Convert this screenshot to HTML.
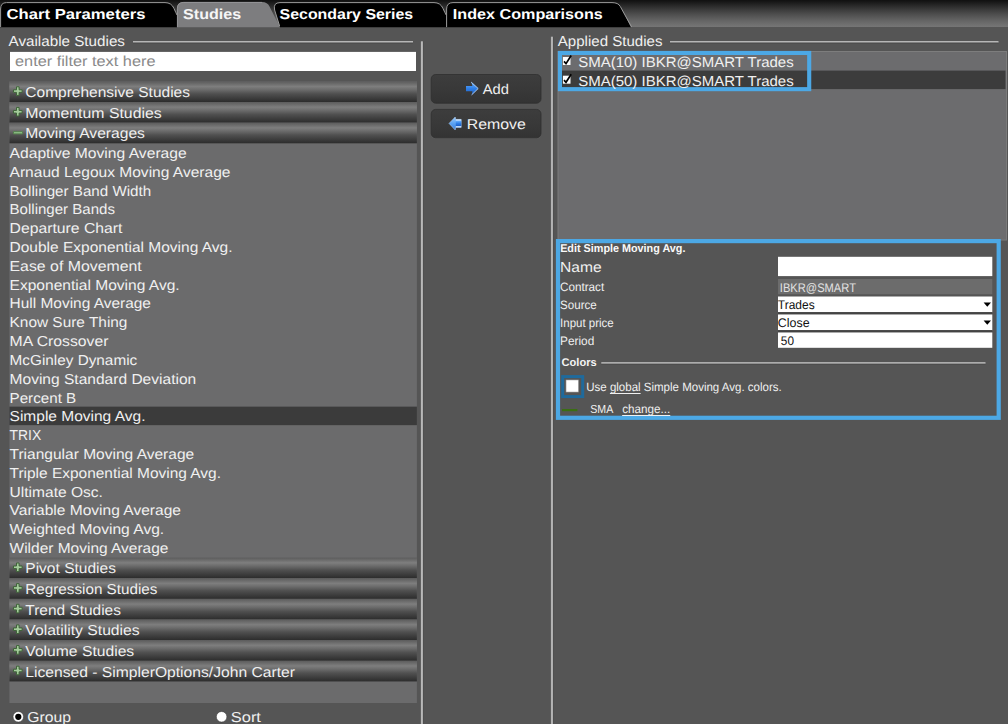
<!DOCTYPE html><html><head><meta charset="utf-8"><title>Studies</title><style>
*{box-sizing:border-box;margin:0;padding:0}
html,body{width:1008px;height:724px;overflow:hidden;background:#555555;font-family:"Liberation Sans",sans-serif;}
#g{position:absolute;left:0;top:0}
.t{position:absolute;white-space:pre;transform-origin:0 0;line-height:1;text-rendering:geometricPrecision}
u{text-decoration-thickness:1px;text-underline-offset:1.5px}
</style></head><body>
<svg id="g" width="1008" height="724" viewBox="0 0 1008 724">
<defs>
<linearGradient id="tb" x1="0" y1="0" x2="0" y2="1"><stop offset="0" stop-color="#101010"/><stop offset="0.1" stop-color="#1b1b1b"/><stop offset="0.35" stop-color="#3a3a3a"/><stop offset="0.55" stop-color="#505050"/><stop offset="0.78" stop-color="#666666"/><stop offset="1" stop-color="#767676"/></linearGradient>
<linearGradient id="hd" x1="0" y1="0" x2="0" y2="1"><stop offset="0" stop-color="#5c5c5c"/><stop offset="0.12" stop-color="#6c6c6c"/><stop offset="0.25" stop-color="#7e7e7e"/><stop offset="0.4" stop-color="#6c6c6c"/><stop offset="0.6" stop-color="#505050"/><stop offset="0.82" stop-color="#3c3c3c"/><stop offset="1" stop-color="#2c2c2c"/></linearGradient>
<linearGradient id="bt" x1="0" y1="0" x2="0" y2="1"><stop offset="0" stop-color="#3d3d3d"/><stop offset="0.6" stop-color="#383838"/><stop offset="1" stop-color="#333333"/></linearGradient>
<linearGradient id="g1" x1="0" y1="0" x2="0" y2="1"><stop offset="0" stop-color="#6cb4ff"/><stop offset="0.5" stop-color="#2f7fe6"/><stop offset="1" stop-color="#1d5fc4"/></linearGradient>
<linearGradient id="g2" x1="0" y1="0" x2="0" y2="1"><stop offset="0" stop-color="#9accff"/><stop offset="0.5" stop-color="#5aa2f2"/><stop offset="1" stop-color="#3b7fdc"/></linearGradient>
<linearGradient id="vl" x1="0" y1="0" x2="1" y2="0"><stop offset="0" stop-color="#7a7a7a"/><stop offset="0.45" stop-color="#d2d2d2"/><stop offset="1" stop-color="#8a8a8a"/></linearGradient>
</defs>
<rect x="0.00" y="0.00" width="1008.00" height="27.00" fill="url(#tb)" />
<path d="M0 27.2 L0 9 Q0 2.5 6.5 2.5 L165 2.5 Q171.5 2.5 174 8.5 Q176 13 177 15 L177 27.2 Z" fill="#000"/>
<path d="M0.6 27 L0.6 9 Q0.6 2.6 6.5 2.6 L165 2.6 Q171.5 2.6 174 8.5 Q176 13 177 15" fill="none" stroke="#9a9a9a" stroke-width="1"/>
<path d="M177 27.2 L177 8.5 Q177 2 183.5 2 L262 2 Q267.5 2 269.5 6.5 L280 27.2 Z" fill="#7d7d7f"/>
<path d="M177.4 27 L177.4 8.5 Q177.4 2.4 183.5 2.4 L262 2.4" fill="none" stroke="#9c9c9e" stroke-width="0.8"/>
<path d="M280 27.2 L274.5 10 Q272.8 2.5 280 2.5 L434 2.5 Q440.5 2.5 443 8.5 Q445 13 446.2 15 L446.2 27.2 Z" fill="#000"/>
<path d="M279.6 26 L274.6 10 Q273 2.6 280 2.6 L434 2.6 Q440.5 2.6 443 8.5 Q445 13 446.2 15" fill="none" stroke="#9a9a9a" stroke-width="1"/>
<path d="M446.4 27.2 L446.4 9 Q446.4 2.5 453 2.5 L612 2.5 Q618.3 2.5 620.3 6.5 L631 27.2 Z" fill="#000"/>
<path d="M446.6 27 L446.6 9 Q446.6 2.6 453 2.6 L612 2.6 Q618.3 2.6 620.3 6.5 L631.6 27" fill="none" stroke="#9a9a9a" stroke-width="1"/>
<rect x="133.00" y="41.00" width="280.00" height="1.70" fill="#b6b6b6" />
<rect x="133.00" y="42.70" width="280.00" height="0.90" fill="#4b4b4b" />
<rect x="10.00" y="51.90" width="406.00" height="19.10" fill="#fff" />
<rect x="9.40" y="81.40" width="407.50" height="621.60" fill="#6b6b6c" />
<rect x="9.40" y="81.40" width="407.50" height="20.64" fill="url(#hd)" />
<path transform="translate(17.80 91.10)" d="M-1.3 -4.3H1.3V-1.3H4.3V1.3H1.3V4.3H-1.3V1.3H-4.3V-1.3H-1.3Z" fill="#a4cc9b" stroke="#3f6439" stroke-width="1" stroke-linejoin="round"/>
<rect x="9.40" y="102.04" width="407.50" height="20.64" fill="url(#hd)" />
<path transform="translate(17.80 111.74)" d="M-1.3 -4.3H1.3V-1.3H4.3V1.3H1.3V4.3H-1.3V1.3H-4.3V-1.3H-1.3Z" fill="#a4cc9b" stroke="#3f6439" stroke-width="1" stroke-linejoin="round"/>
<rect x="9.40" y="122.68" width="407.50" height="20.64" fill="url(#hd)" />
<path transform="translate(18.00 132.78)" d="M-4.5 -1.1H4.5V1.1H-4.5Z" fill="#93c48b" stroke="#55804e" stroke-width="1" stroke-linejoin="round"/>
<rect x="9.40" y="557.60" width="407.50" height="20.64" fill="url(#hd)" />
<path transform="translate(17.80 567.30)" d="M-1.3 -4.3H1.3V-1.3H4.3V1.3H1.3V4.3H-1.3V1.3H-4.3V-1.3H-1.3Z" fill="#a4cc9b" stroke="#3f6439" stroke-width="1" stroke-linejoin="round"/>
<rect x="9.40" y="578.24" width="407.50" height="20.64" fill="url(#hd)" />
<path transform="translate(17.80 587.94)" d="M-1.3 -4.3H1.3V-1.3H4.3V1.3H1.3V4.3H-1.3V1.3H-4.3V-1.3H-1.3Z" fill="#a4cc9b" stroke="#3f6439" stroke-width="1" stroke-linejoin="round"/>
<rect x="9.40" y="598.88" width="407.50" height="20.64" fill="url(#hd)" />
<path transform="translate(17.80 608.58)" d="M-1.3 -4.3H1.3V-1.3H4.3V1.3H1.3V4.3H-1.3V1.3H-4.3V-1.3H-1.3Z" fill="#a4cc9b" stroke="#3f6439" stroke-width="1" stroke-linejoin="round"/>
<rect x="9.40" y="619.52" width="407.50" height="20.64" fill="url(#hd)" />
<path transform="translate(17.80 629.22)" d="M-1.3 -4.3H1.3V-1.3H4.3V1.3H1.3V4.3H-1.3V1.3H-4.3V-1.3H-1.3Z" fill="#a4cc9b" stroke="#3f6439" stroke-width="1" stroke-linejoin="round"/>
<rect x="9.40" y="640.16" width="407.50" height="20.64" fill="url(#hd)" />
<path transform="translate(17.80 649.86)" d="M-1.3 -4.3H1.3V-1.3H4.3V1.3H1.3V4.3H-1.3V1.3H-4.3V-1.3H-1.3Z" fill="#a4cc9b" stroke="#3f6439" stroke-width="1" stroke-linejoin="round"/>
<rect x="9.40" y="660.80" width="407.50" height="20.64" fill="url(#hd)" />
<path transform="translate(17.80 670.50)" d="M-1.3 -4.3H1.3V-1.3H4.3V1.3H1.3V4.3H-1.3V1.3H-4.3V-1.3H-1.3Z" fill="#a4cc9b" stroke="#3f6439" stroke-width="1" stroke-linejoin="round"/>
<rect x="9.40" y="406.64" width="407.50" height="18.51" fill="#3b3b3b" />
<circle cx="18.3" cy="716.8" r="5.3" fill="#fff" stroke="#3a3a3a" stroke-width="0.6"/>
<circle cx="18.3" cy="716.8" r="3.1" fill="#000"/>
<circle cx="221.6" cy="716.8" r="5.3" fill="#fff" stroke="#3a3a3a" stroke-width="0.6"/>
<rect x="420.70" y="41.30" width="2.50" height="690.00" fill="url(#vl)" />
<rect x="423.20" y="41.30" width="0.80" height="690.00" fill="#4c4c4c" />
<rect x="550.80" y="36.70" width="2.40" height="690.00" fill="url(#vl)" />
<rect x="553.20" y="36.70" width="0.80" height="690.00" fill="#4c4c4c" />
<rect x="431.20" y="75.40" width="109.80" height="28.80" fill="#5c5c5c" rx="4.5"/>
<rect x="431.20" y="74.50" width="109.80" height="28.80" fill="url(#bt)" rx="4.5" stroke="#2e2e2e" stroke-width="0.8"/>
<rect x="431.20" y="110.30" width="109.80" height="28.40" fill="#5c5c5c" rx="4.5"/>
<rect x="431.20" y="109.40" width="109.80" height="28.40" fill="url(#bt)" rx="4.5" stroke="#2e2e2e" stroke-width="0.8"/>
<path d="M466 85.9H472.5L471.2 82.1L478.2 88.5L471.6 94.9L472.5 91.2H466Z" fill="url(#g1)"/>
<path d="M471.2 82.1L478.2 88.5L471.6 94.9" fill="none" stroke="#b6d2f5" stroke-width="0.9"/>
<path d="M461.2 119.4H455.7L455.2 117L449 123.4L455.2 130L455.7 127.4H461.2Z" fill="url(#g2)" stroke="#b9d9fb" stroke-width="0.5"/>
<rect x="455.8" y="120.7" width="5.4" height="5.4" fill="url(#g1)"/>
<path d="M455.8 120H461.2M455.8 126.8H461.2" stroke="#e4f0ff" stroke-width="1.1"/>
<rect x="670.00" y="41.00" width="328.50" height="1.70" fill="#b6b6b6" />
<rect x="670.00" y="42.70" width="328.50" height="0.90" fill="#4b4b4b" />
<rect x="557.50" y="51.00" width="449.50" height="189.50" fill="#7d7d7d" />
<rect x="558.50" y="52.00" width="447.60" height="187.60" fill="#6c6c6e" />
<rect x="558.50" y="70.60" width="447.00" height="18.50" fill="#3c3c3c" />
<rect x="562.90" y="57.00" width="7.60" height="8.00" fill="#fff" />
<path d="M564.00 61.40L566.00 63.60L571.20 55.50" stroke="#000" stroke-width="1.7" fill="none"/>
<rect x="562.90" y="75.70" width="7.60" height="8.00" fill="#fff" />
<path d="M564.00 80.10L566.00 82.30L571.20 74.20" stroke="#000" stroke-width="1.7" fill="none"/>
<rect x="559.95" y="52.95" width="249.25" height="36.2" fill="none" stroke="#4ca8e5" stroke-width="4.1"/>
<rect x="558.0" y="241.1" width="440.7" height="176.7" fill="none" stroke="#4ca8e5" stroke-width="4.2"/>
<rect x="778.00" y="256.80" width="214.30" height="19.30" fill="#fff" />
<rect x="778.00" y="279.00" width="214.30" height="15.30" fill="#6c6c6c" />
<rect x="778.00" y="296.50" width="214.30" height="15.80" fill="#fff" />
<rect x="778.00" y="312.30" width="214.30" height="1.20" fill="#333" />
<path d="M983.6 302.50H991L987.3 306.70Z" fill="#000"/>
<rect x="778.00" y="314.50" width="214.30" height="15.80" fill="#fff" />
<rect x="778.00" y="330.30" width="214.30" height="1.20" fill="#333" />
<path d="M983.6 320.50H991L987.3 324.70Z" fill="#000"/>
<rect x="778.00" y="332.50" width="214.30" height="15.30" fill="#fff" />
<rect x="601.30" y="362.10" width="384.20" height="1.70" fill="#b6b6b6" />
<rect x="601.30" y="363.80" width="384.20" height="0.90" fill="#4b4b4b" />
<rect x="562.7" y="376.6" width="20" height="20" fill="none" stroke="#1f6a9c" stroke-width="3.0"/>
<rect x="565.80" y="379.70" width="12.90" height="12.60" fill="#aaa" />
<rect x="566.40" y="380.30" width="11.70" height="11.40" fill="#fff" />
<rect x="562.00" y="409.00" width="15.40" height="2.20" fill="#3b6e12" />
</svg>
<div class="t" style="left:6px;top:8px;font-size:14.4px;color:#fff;transform:translateX(0.55px) scaleX(1.1577);font-weight:bold;">Chart Parameters</div>
<div class="t" style="left:183px;top:8px;font-size:14.4px;color:#f6f6f6;transform:translateX(0.05px) scaleX(1.1186);font-weight:bold;">Studies</div>
<div class="t" style="left:279px;top:8px;font-size:14.4px;color:#fff;transform:translateX(0.55px) scaleX(1.1064);font-weight:bold;">Secondary Series</div>
<div class="t" style="left:452px;top:8px;font-size:14.4px;color:#fff;transform:translateX(0.85px) scaleX(1.1225);font-weight:bold;">Index Comparisons</div>
<div class="t" style="left:8px;top:35px;font-size:14.4px;color:#f0f0f0;transform:translateX(0.55px) scaleX(1.0568);">Available Studies</div>
<div class="t" style="left:15px;top:55px;font-size:14.4px;color:#8a8a8a;transform:translateX(0.05px) scaleX(1.1324);">enter filter text here</div>
<div class="t" style="left:25px;top:86px;font-size:14.4px;color:#f0f0f0;transform:translateX(0.30px) scaleX(1.0777);">Comprehensive Studies</div>
<div class="t" style="left:25px;top:107px;font-size:14.4px;color:#f0f0f0;transform:translateX(0.30px) scaleX(1.1001);">Momentum Studies</div>
<div class="t" style="left:25px;top:127px;font-size:14.4px;color:#f0f0f0;transform:translateX(0.30px) scaleX(1.0863);">Moving Averages</div>
<div class="t" style="left:25px;top:562px;font-size:14.4px;color:#f0f0f0;transform:translateX(0.30px) scaleX(1.0792);">Pivot Studies</div>
<div class="t" style="left:25px;top:583px;font-size:14.4px;color:#f0f0f0;transform:translateX(0.30px) scaleX(1.0589);">Regression Studies</div>
<div class="t" style="left:25px;top:604px;font-size:14.4px;color:#f0f0f0;transform:translateX(0.30px) scaleX(1.0740);">Trend Studies</div>
<div class="t" style="left:25px;top:624px;font-size:14.4px;color:#f0f0f0;transform:translateX(0.30px) scaleX(1.0916);">Volatility Studies</div>
<div class="t" style="left:25px;top:645px;font-size:14.4px;color:#f0f0f0;transform:translateX(0.30px) scaleX(1.0890);">Volume Studies</div>
<div class="t" style="left:25px;top:666px;font-size:14.4px;color:#f0f0f0;transform:translateX(0.30px) scaleX(1.0875);">Licensed - SimplerOptions/John Carter</div>
<div class="t" style="left:9px;top:147px;font-size:14.4px;color:#f0f0f0;transform:translateX(0.55px) scaleX(1.0872);">Adaptive Moving Average</div>
<div class="t" style="left:9px;top:166px;font-size:14.4px;color:#f0f0f0;transform:translateX(0.55px) scaleX(1.0799);">Arnaud Legoux Moving Average</div>
<div class="t" style="left:9px;top:185px;font-size:14.4px;color:#f0f0f0;transform:translateX(0.55px) scaleX(1.0540);">Bollinger Band Width</div>
<div class="t" style="left:9px;top:203px;font-size:14.4px;color:#f0f0f0;transform:translateX(0.55px) scaleX(1.0455);">Bollinger Bands</div>
<div class="t" style="left:9px;top:222px;font-size:14.4px;color:#f0f0f0;transform:translateX(0.55px) scaleX(1.0941);">Departure Chart</div>
<div class="t" style="left:9px;top:241px;font-size:14.4px;color:#f0f0f0;transform:translateX(0.55px) scaleX(1.0771);">Double Exponential Moving Avg.</div>
<div class="t" style="left:9px;top:260px;font-size:14.4px;color:#f0f0f0;transform:translateX(0.55px) scaleX(1.1014);">Ease of Movement</div>
<div class="t" style="left:9px;top:279px;font-size:14.4px;color:#f0f0f0;transform:translateX(0.55px) scaleX(1.0814);">Exponential Moving Avg.</div>
<div class="t" style="left:9px;top:297px;font-size:14.4px;color:#f0f0f0;transform:translateX(0.55px) scaleX(1.0734);">Hull Moving Average</div>
<div class="t" style="left:9px;top:316px;font-size:14.4px;color:#f0f0f0;transform:translateX(0.55px) scaleX(1.0704);">Know Sure Thing</div>
<div class="t" style="left:9px;top:335px;font-size:14.4px;color:#f0f0f0;transform:translateX(0.55px) scaleX(1.0943);">MA Crossover</div>
<div class="t" style="left:9px;top:354px;font-size:14.4px;color:#f0f0f0;transform:translateX(0.55px) scaleX(1.0642);">McGinley Dynamic</div>
<div class="t" style="left:9px;top:373px;font-size:14.4px;color:#f0f0f0;transform:translateX(0.55px) scaleX(1.0802);">Moving Standard Deviation</div>
<div class="t" style="left:9px;top:392px;font-size:14.4px;color:#f0f0f0;transform:translateX(0.55px) scaleX(1.0545);">Percent B</div>
<div class="t" style="left:9px;top:410px;font-size:14.4px;color:#f0f0f0;transform:translateX(0.55px) scaleX(1.0775);">Simple Moving Avg.</div>
<div class="t" style="left:9px;top:429px;font-size:14.4px;color:#f0f0f0;transform:translateX(0.55px) scaleX(0.9655);">TRIX</div>
<div class="t" style="left:9px;top:448px;font-size:14.4px;color:#f0f0f0;transform:translateX(0.55px) scaleX(1.0786);">Triangular Moving Average</div>
<div class="t" style="left:9px;top:467px;font-size:14.4px;color:#f0f0f0;transform:translateX(0.55px) scaleX(1.0743);">Triple Exponential Moving Avg.</div>
<div class="t" style="left:9px;top:486px;font-size:14.4px;color:#f0f0f0;transform:translateX(0.55px) scaleX(1.0815);">Ultimate Osc.</div>
<div class="t" style="left:9px;top:504px;font-size:14.4px;color:#f0f0f0;transform:translateX(0.55px) scaleX(1.0802);">Variable Moving Average</div>
<div class="t" style="left:9px;top:523px;font-size:14.4px;color:#f0f0f0;transform:translateX(0.55px) scaleX(1.0840);">Weighted Moving Avg.</div>
<div class="t" style="left:9px;top:542px;font-size:14.4px;color:#f0f0f0;transform:translateX(0.55px) scaleX(1.0757);">Wilder Moving Average</div>
<div class="t" style="left:27px;top:711px;font-size:14.4px;color:#f0f0f0;transform:translateX(0.30px) scaleX(1.0937);">Group</div>
<div class="t" style="left:230px;top:711px;font-size:14.4px;color:#f0f0f0;transform:translateX(0.80px) scaleX(1.1418);">Sort</div>
<div class="t" style="left:482px;top:83px;font-size:14.2px;color:#f0f0f0;transform:translateX(0.80px) scaleX(1.0356);">Add</div>
<div class="t" style="left:466px;top:118px;font-size:14.2px;color:#f0f0f0;transform:translateX(0.80px) scaleX(1.1174);">Remove</div>
<div class="t" style="left:557px;top:35px;font-size:14.4px;color:#f0f0f0;transform:translateX(0.80px) scaleX(1.0463);">Applied Studies</div>
<div class="t" style="left:578px;top:56px;font-size:14.4px;color:#f0f0f0;transform:translateX(0.15px) scaleX(1.0422);">SMA(10) IBKR@SMART Trades</div>
<div class="t" style="left:578px;top:75px;font-size:14.4px;color:#f0f0f0;transform:translateX(0.15px) scaleX(1.0422);">SMA(50) IBKR@SMART Trades</div>
<div class="t" style="left:560px;top:244px;font-size:11.3px;color:#fafafa;transform:translateX(0.15px) scaleX(0.9567);font-weight:bold;">Edit Simple Moving Avg.</div>
<div class="t" style="left:560px;top:261px;font-size:14.4px;color:#f0f0f0;transform:translateX(0.05px) scaleX(1.0849);">Name</div>
<div class="t" style="left:560px;top:281px;font-size:12.2px;color:#f0f0f0;transform:translateX(0.05px) scaleX(0.9585);">Contract</div>
<div class="t" style="left:560px;top:299px;font-size:12.2px;color:#f0f0f0;transform:translateX(0.05px) scaleX(0.9489);">Source</div>
<div class="t" style="left:560px;top:317px;font-size:12.2px;color:#f0f0f0;transform:translateX(0.05px) scaleX(0.9425);">Input price</div>
<div class="t" style="left:560px;top:335px;font-size:12.2px;color:#f0f0f0;transform:translateX(0.05px) scaleX(0.9692);">Period</div>
<div class="t" style="left:779px;top:282px;font-size:12.5px;color:#e2e2e2;transform:translateX(0.80px) scaleX(0.8918);">IBKR@SMART</div>
<div class="t" style="left:777px;top:299px;font-size:12.5px;color:#111;transform:translateX(0.85px) scaleX(0.9583);">Trades</div>
<div class="t" style="left:777px;top:317px;font-size:12.5px;color:#111;transform:translateX(0.85px) scaleX(0.9963);">Close</div>
<div class="t" style="left:780px;top:335px;font-size:12.5px;color:#111;transform:translateX(0.85px) scaleX(0.9420);">50</div>
<div class="t" style="left:561px;top:358px;font-size:11.2px;color:#f4f4f4;transform:translateX(0.55px) scaleX(0.9919);font-weight:bold;">Colors</div>
<div class="t" style="left:586px;top:381px;font-size:12px;color:#f0f0f0;transform:translateX(0.25px) scaleX(0.9585);">Use <u>global</u> Simple Moving Avg. colors.</div>
<div class="t" style="left:590px;top:404px;font-size:11.6px;color:#f0f0f0;transform:translateX(0.25px) scaleX(0.9154);">SMA</div>
<div class="t" style="left:622px;top:403px;font-size:12px;color:#f0f0f0;transform:translateX(0.15px) scaleX(0.9742);"><u>change...</u></div>
</body></html>
